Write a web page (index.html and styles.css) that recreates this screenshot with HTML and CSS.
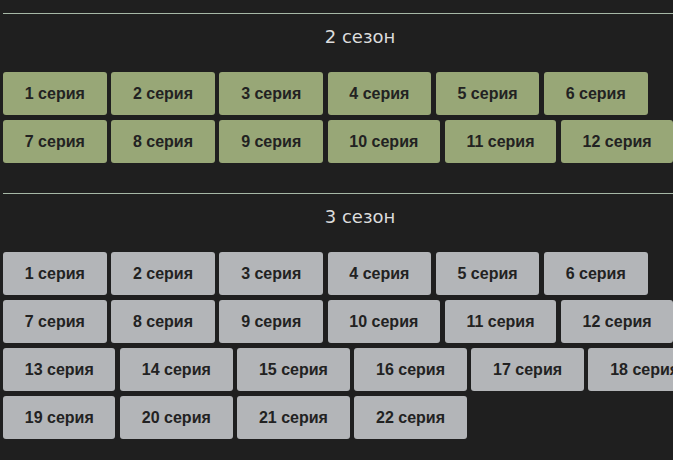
FILE: index.html
```html
<!DOCTYPE html>
<html lang="ru">
<head>
    <meta charset="UTF-8">
    <meta name="viewport" content="width=device-width, initial-scale=1.0">
    <title>Серии</title>
    <link rel="stylesheet" href="styles.css">
</head>
<body>
    <div class="seasons">
        <div class="season">
            <h2 class="season-title">2 сезон</h2>
            <div class="episodes">
                <button class="episode watched">1 серия</button>
                <button class="episode watched">2 серия</button>
                <button class="episode watched">3 серия</button>
                <button class="episode watched">4 серия</button>
                <button class="episode watched">5 серия</button>
                <button class="episode watched">6 серия</button>
                <button class="episode watched">7 серия</button>
                <button class="episode watched">8 серия</button>
                <button class="episode watched">9 серия</button>
                <button class="episode watched">10 серия</button>
                <button class="episode watched">11 серия</button>
                <button class="episode watched">12 серия</button>
            </div>
        </div>

        <div class="season">
            <h2 class="season-title">3 сезон</h2>
            <div class="episodes">
                <button class="episode">1 серия</button>
                <button class="episode">2 серия</button>
                <button class="episode">3 серия</button>
                <button class="episode">4 серия</button>
                <button class="episode">5 серия</button>
                <button class="episode">6 серия</button>
                <button class="episode">7 серия</button>
                <button class="episode">8 серия</button>
                <button class="episode">9 серия</button>
                <button class="episode">10 серия</button>
                <button class="episode">11 серия</button>
                <button class="episode">12 серия</button>
                <button class="episode">13 серия</button>
                <button class="episode">14 серия</button>
                <button class="episode">15 серия</button>
                <button class="episode">16 серия</button>
                <button class="episode">17 серия</button>
                <button class="episode">18 серия</button>
                <button class="episode">19 серия</button>
                <button class="episode">20 серия</button>
                <button class="episode">21 серия</button>
                <button class="episode">22 серия</button>
            </div>
        </div>
    </div>
</body>
</html>
```

FILE: styles.css
```css
* {
    margin: 0;
    padding: 0;
    box-sizing: border-box;
}

html, body {
    overflow: hidden;
}

body {
    background-color: #1f1f1f;
    font-family: "Liberation Sans", Arial, sans-serif;
}

.seasons {
    width: 717px;
    padding-left: 3px;
}

.season {
    padding-top: 13px;
    margin-bottom: 17px;
}

.season-title {
    border-top: 1px solid #a6b8a6;
    padding-top: 12px;
    margin-bottom: 25px;
    font-family: "DejaVu Sans", Verdana, sans-serif;
    font-size: 18px;
    font-weight: normal;
    line-height: 21px;
    text-align: center;
    color: #dcdcdc;
}

.episodes {
    display: flex;
    flex-wrap: wrap;
    gap: 5px 4.6px;
}

.episode {
    padding: 12px 21.75px;
    border: none;
    border-radius: 3px;
    background-color: #b3b5b8;
    color: #222;
    font-family: "Liberation Sans", Arial, sans-serif;
    font-size: 16px;
    font-weight: bold;
    line-height: 19px;
    cursor: pointer;
}

.episode.watched {
    background-color: #98a777;
}
```
